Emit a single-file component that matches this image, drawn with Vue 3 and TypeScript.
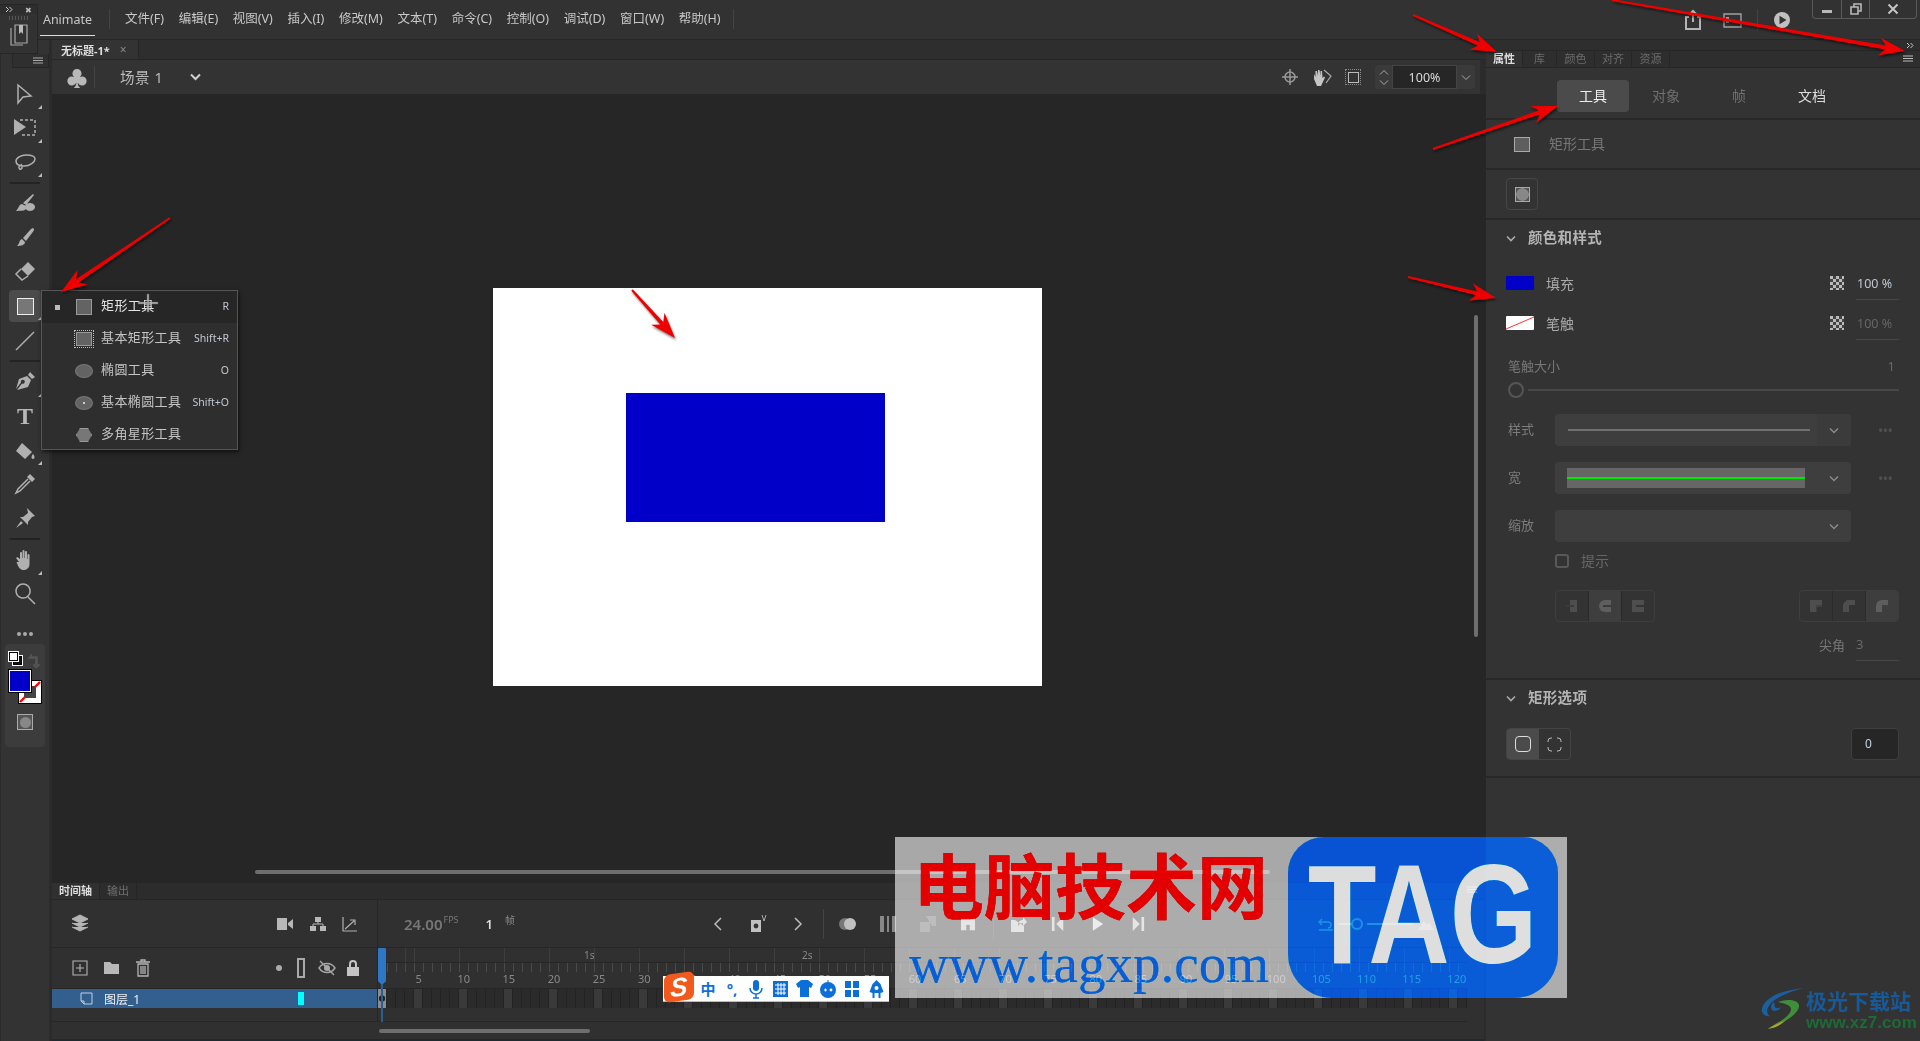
<template>
  <div class="app">
    <!-- menu bar -->
    <header class="topbar">
      <div class="brand">Animate</div>
      <nav class="menu">
        <span v-for="m in menus" :key="m">{{ m }}</span>
      </nav>
      <div class="top-actions">
        <svg class="ico" width="22" height="22" viewBox="0 0 22 22"><path d="M7 8H4v12h14V8h-3M11 2v11M8 5l3-3 3 3" fill="none" stroke="#b4b4b4" stroke-width="2" /></svg>
        <svg class="ico win-ico" width="22" height="22" viewBox="0 0 22 22"><path d="M2 5h17v13H2zM2 5" fill="none" stroke="#a0a0a0" stroke-width="1.4" /><rect x="4" y="8" width="3" height="6" fill="#a0a0a0" /></svg>
        <i class="top-sep"></i>
        <svg class="ico" width="18" height="18" viewBox="0 0 18 18"><circle cx="9" cy="9" r="8" fill="#c0c0c0" /><path d="M6.5 4.8L13.5 9l-7 4.2z" fill="#333" /></svg>
      </div>
      <div class="winbtns">
        <span><i class="min"></i></span>
        <span><svg width="12" height="12" viewBox="0 0 12 12"><path d="M1 4h7v7H1zM4 4V1h7v7H8" fill="none" stroke="#b8b8b8" stroke-width="1.6" /></svg></span>
        <span><svg width="12" height="12" viewBox="0 0 12 12"><path d="M1.5 1.5l9 9M10.5 1.5l-9 9" stroke="#c4c4c4" stroke-width="2" /></svg></span>
      </div>
    </header>

    <div class="workspace">
      <!-- tools -->
      <aside class="toolbar">
        <div class="tool-head">
          <span class="tool-head-box"><svg width="12" height="8" viewBox="0 0 12 8"><path d="M1 1h10M1 3.5h10M1 6h10" stroke="#aaa" /></svg></span>
        </div>
        <template v-for="(group, gi) in tools" :key="gi">
          <div v-if="gi" class="tool-sep"><i></i></div>
          <div v-for="t in group" :key="t.id" class="tool" :class="{ active: t.id === 'rect' }">
            <span v-if="t.id === 'text'" class="tool-t">T</span>
            <i v-else-if="t.id === 'rect'" class="rect-ico"></i>
            <svg v-else width="24" height="24" viewBox="0 0 24 24">
              <path v-if="t.fill" :d="t.fill" fill="#b0b0b0" />
              <path v-if="t.line" :d="t.line" fill="none" stroke="#b0b0b0" stroke-width="1.5" :stroke-dasharray="t.dash" />
            </svg>
            <b v-if="t.corner" class="corner"></b>
          </div>
        </template>
        <div class="tool-dots"><i></i><i></i><i></i></div>
        <div class="colors">
          <div class="swap-row">
            <span class="mini-sw"><i></i><i></i></span>
            <svg width="14" height="14" viewBox="0 0 14 14"><path d="M2 5l3-3v2h5v7H8l2 3 3-3h-2V3H5V0" fill="none" stroke="#555" stroke-width="1.5" /></svg>
          </div>
          <div class="sw-stack">
            <div class="stroke-sw"><svg width="22" height="22" viewBox="0 0 22 22"><path d="M1 21l5-5M16 6l5-5" stroke="#f00" stroke-width="2.4" /></svg></div>
            <div class="fill-sw"></div>
          </div>
          <div class="draw-btn"><i></i></div>
        </div>
      </aside>

      <!-- document area -->
      <main class="center">
        <div class="doc-tabs">
          <div class="doc-tab"><strong>无标题-1*</strong><span>×</span></div>
        </div>
        <div class="scene">
          <span class="club">♣</span>
          <i class="scene-sep"></i>
          <span class="scene-name">场景 1</span>
          <svg class="scene-chev" width="11" height="8" viewBox="0 0 11 8"><path d="M1 1.5l4.5 4.5L10 1.5" fill="none" stroke="#d0d0d0" stroke-width="2" /></svg>
          <div class="scene-right">
            <svg width="18" height="18" viewBox="0 0 18 18"><circle cx="9" cy="9" r="5" fill="none" stroke="#999" stroke-width="1.5" /><path d="M9 1v16M1 9h16" stroke="#999" stroke-width="1.5" /></svg>
            <svg width="22" height="20" viewBox="0 0 22 20"><path d="M3 12V7l1.500 3V4h1.500l1 5V3h1.500l1 6V4h1.500l.5 7 1.500-1.500 1 1L10 19H6z" fill="#c4c4c4" /><path d="M13 3l7 6-5 7" fill="none" stroke="#aaa" stroke-width="1.2" /></svg>
            <span class="clip-ico"><i></i></span>
            <div class="zoom-box">
              <div class="stepper">
                <svg width="10" height="7" viewBox="0 0 10 7"><path d="M1 5.5l4-4 4 4" fill="none" stroke="#aaa" /></svg>
                <svg width="10" height="7" viewBox="0 0 10 7"><path d="M1 1.5l4 4 4-4" fill="none" stroke="#aaa" /></svg>
              </div>
              <div class="zoom-val">100%</div>
              <svg class="zoom-chev" width="10" height="7" viewBox="0 0 10 7"><path d="M1 1.5l4 4 4-4" fill="none" stroke="#aaa" /></svg>
            </div>
          </div>
        </div>

        <div class="stage-area">
          <div class="stage"><div class="stage-rect"></div></div>
          <i class="vscroll"></i>
          <i class="hscroll"></i>
        </div>

        <!-- timeline -->
        <section class="timeline">
          <div class="tl-tabs">
            <span class="on">时间轴</span>
            <span>输出</span>
            <svg class="tl-menu" width="12" height="8" viewBox="0 0 12 8"><path d="M1 1h10M1 3.5h10M1 6h10" stroke="#aaa" /></svg>
          </div>
          <div class="tl-bar">
            <div class="tl-bar-left">
              <svg class="layers-ico" width="18" height="20" viewBox="0 0 18 20"><path d="M9 1l8 4-8 4-8-4zM1 9l8 4 8-4M1 13l8 4 8-4" fill="#b4b4b4" stroke="#b4b4b4" stroke-width="1" /></svg>
              <div class="tl-bar-icons">
                <svg width="18" height="14" viewBox="0 0 18 14"><path d="M1 1h10v12H1zM12 6l5-4v10l-5-4z" fill="#b8b8b8" /></svg>
                <svg width="18" height="16" viewBox="0 0 18 16"><path d="M6 1h6v5H6zM1 10h6v5H1zM11 10h6v5h-6z" fill="#b8b8b8" /><path d="M9 6v2H4v2M9 8h5v2" fill="none" stroke="#b8b8b8" /></svg>
                <svg width="16" height="16" viewBox="0 0 16 16"><path d="M1 1v14h14M3 13l9-8M8 4h5v5" fill="none" stroke="#b0b0b0" stroke-width="1.2" /></svg>
              </div>
            </div>
            <div class="tl-bar-right">
              <span class="fps">24.00<sup>FPS</sup></span>
              <span class="frame-no">1</span>
              <span class="frame-unit">帧</span>
              <div class="transport">
                <span><svg width="10" height="16" viewBox="0 0 10 16"><path d="M8 2L2 8l6 6" fill="none" stroke="#bbb" stroke-width="1.5" /></svg></span>
                <span><svg width="18" height="20" viewBox="0 0 18 20"><path d="M2 6h10v12H2z" fill="#c0c0c0" /><circle cx="7" cy="12" r="2.400" fill="#333" /><path d="M13 1l2 6M17 1l-2 6" stroke="#aaa" /></svg></span>
                <span><svg width="10" height="16" viewBox="0 0 10 16"><path d="M2 2l6 6-6 6" fill="none" stroke="#bbb" stroke-width="1.5" /></svg></span>
                <i class="tp-sep"></i>
                <span><svg width="18" height="16" viewBox="0 0 18 16"><circle cx="6" cy="8" r="6" fill="#777" /><circle cx="11" cy="8" r="6" fill="#c0c0c0" /></svg></span>
                <span><svg width="18" height="18" viewBox="0 0 18 18"><path d="M1 1h4v16H1zM8 1h2v16H8zM13 1h4v16h-4z" fill="#888" /></svg></span>
                <span><svg width="18" height="18" viewBox="0 0 18 18"><path d="M1 7h10v10H1zM7 1h10v10h-4" fill="#5a5a5a" /></svg></span>
                <span><svg width="16" height="14" viewBox="0 0 18 16"><path d="M1 1h16v14h-6V9H7v6H1z" fill="#c0c0c0" /></svg></span>
                <i class="tp-sep"></i>
                <span><svg width="18" height="18" viewBox="0 0 18 18"><path d="M6 5H2v12h13v-6M9 11c0-4 2-6 5-6V2l4 5-4 4V8c-2 0-4 1-5 3z" fill="#c0c0c0" /></svg></span>
                <span><svg width="14" height="16" viewBox="0 0 16 18"><path d="M1 1h3v16H1zM14 1v16L6 9z" fill="#c0c0c0" /></svg></span>
                <span><svg width="12" height="16" viewBox="0 0 14 18"><path d="M1 1l12 8-12 8z" fill="#d0d0d0" /></svg></span>
                <span><svg width="14" height="16" viewBox="0 0 16 18"><path d="M12 1h3v16h-3zM2 1v16l8-8z" fill="#c0c0c0" /></svg></span>
              </div>
              <div class="tl-zoom">
                <svg width="18" height="16" viewBox="0 0 18 16"><path d="M2 14h14M5 3L2 6l3 3M2 6h9a3 3 0 0 1 0 6" fill="none" stroke="#787878" stroke-width="1.4" /></svg>
                <i class="z-line"></i><i class="z-knob"></i><i class="z-line wide"></i>
                <svg width="18" height="14" viewBox="0 0 18 14"><path d="M1 13l6-9 3 4 2-3 5 8z" fill="#787878" /></svg>
              </div>
            </div>
          </div>

          <div class="tl-layers">
            <div class="layer-col">
              <div class="layer-tools">
                <svg width="16" height="16" viewBox="0 0 16 16"><path d="M1 1h14v14H1zM8 4v8M4 8h8" fill="none" stroke="#b4b4b4" stroke-width="1.1" /></svg>
                <svg width="17" height="14" viewBox="0 0 17 14"><path d="M1 1h6l2 2h7v10H1z" fill="#b8b8b8" /></svg>
                <svg width="16" height="18" viewBox="0 0 16 18"><path d="M1 3h14M6 3V1h4v2M3 5h10v12H3zM6 7v8M8 7v8M10 7v8" fill="none" stroke="#b4b4b4" stroke-width="1.3" /></svg>
                <div class="layer-flags">
                  <i class="dot"></i>
                  <i class="outline"></i>
                  <svg class="eye" width="18" height="18" viewBox="0 0 18 18"><path d="M1 9c4-6 12-6 16 0-4 6-12 6-16 0zM2 2l14 14" fill="none" stroke="#a8a8a8" stroke-width="1.4" /><circle cx="9" cy="9" r="3" fill="#a8a8a8" /></svg>
                  <svg class="lock" width="14" height="18" viewBox="0 0 14 18"><path d="M4 8V5a3 3 0 0 1 6 0v3" fill="none" stroke="#c4c4c4" stroke-width="2" /><path d="M1 8h12v9H1z" fill="#c4c4c4" /></svg>
                </div>
              </div>
              <div class="layer-row">
                <svg width="13" height="13" viewBox="0 0 13 13"><path d="M1 1h11v11H4L1 9z M1 9h3v3" fill="none" stroke="#c0d0e0" /></svg>
                <span>图层_1</span>
                <i class="cyan"></i>
              </div>
              <div class="layer-empty"></div>
            </div>
            <div class="frames-col">
              <div class="ruler">
                <div class="ruler-sec"><span class="s1">1s</span><span class="s2">2s</span></div>
                <div class="ruler-ticks"></div>
                <div class="ruler-nums"><span v-for="n in frameNums" :key="n">{{ n }}</span></div>
              </div>
              <div class="frames">
                <i v-for="f in 121" :key="f" :class="{ first: f === 1, five: f % 5 === 0 }"></i>
              </div>
              <div class="frames-empty"></div>
              <div class="playhead"></div>
              <div class="playline"></div>
            </div>
          </div>
          <div class="tl-foot"><i></i></div>
        </section>
      </main>

      <!-- properties -->
      <aside class="props">
        <div class="props-collapse">
          <svg width="8" height="7" viewBox="0 0 8 7"><path d="M1 1l2.500 2.500L1 6M4.500 1L7 3.500 4.500 6" fill="none" stroke="#ccc" /></svg>
        </div>
        <div class="props-tabs">
          <span v-for="(p, i) in panelTabs" :key="p" :class="{ on: i === 0 }">{{ p }}</span>
          <svg width="12" height="8" viewBox="0 0 12 8"><path d="M1 1h10M1 3.5h10M1 6h10" stroke="#bbb" /></svg>
        </div>
        <div class="sub-tabs">
          <span class="on">工具</span><span class="dim">对象</span><span class="dim">帧</span><span>文档</span>
        </div>
        <div class="tool-name"><i class="rect-ico small"></i><span>矩形工具</span></div>
        <div class="obj-row"><div class="obj-btn"><i></i></div></div>

        <section class="colors-sec">
          <h3><svg width="10" height="7" viewBox="0 0 10 7"><path d="M1 1.500l4 4 4-4" fill="none" stroke="#aaa" stroke-width="1.600" /></svg>颜色和样式</h3>
          <div class="paint-row first">
            <i class="sw fill"></i><span>填充</span><i class="checker"></i><em class="pct">100 %</em>
          </div>
          <div class="paint-row">
            <i class="sw stroke"><svg width="28" height="14" viewBox="0 0 28 14"><path d="M0 13L28 1" stroke="#f33" /></svg></i><span>笔触</span><i class="checker"></i><em class="pct off">100 %</em>
          </div>
          <div class="size-head"><label>笔触大小</label><b>1</b></div>
          <div class="slider"><i class="knob"></i><i class="track"></i></div>
          <div class="field">
            <label>样式</label>
            <div class="select"><i class="style-line"></i><div class="sel-arrow split"><svg width="10" height="7" viewBox="0 0 10 7"><path d="M1 1.500l4 4 4-4" fill="none" stroke="#8a8a8a" stroke-width="1.500" /></svg></div></div>
            <span class="more">•••</span>
          </div>
          <div class="field">
            <label>宽</label>
            <div class="select"><div class="width-prev"><i></i></div><div class="sel-arrow"><svg width="10" height="7" viewBox="0 0 10 7"><path d="M1 1.500l4 4 4-4" fill="none" stroke="#8a8a8a" stroke-width="1.500" /></svg></div></div>
            <span class="more">•••</span>
          </div>
          <div class="field">
            <label>缩放</label>
            <div class="select"><div class="sel-arrow"><svg width="10" height="7" viewBox="0 0 10 7"><path d="M1 1.500l4 4 4-4" fill="none" stroke="#8a8a8a" stroke-width="1.500" /></svg></div></div>
          </div>
          <div class="hint"><i></i><span>提示</span></div>
          <div class="caps">
            <div class="seg">
              <span><svg width="12" height="12" viewBox="0 0 12 12"><path d="M4 0h7v12H4z" fill="#4e4e4e" /><rect x="0" y="5" width="8" height="2" fill="#3a3a3a" /></svg></span>
              <span class="lit"><svg width="12" height="12" viewBox="0 0 12 12"><path d="M6 0h6v12H6A6 6 0 0 1 6 0z" fill="#5e5e5e" /><rect x="4" y="5" width="8" height="2" fill="#3a3a3a" /></svg></span>
              <span><svg width="12" height="12" viewBox="0 0 12 12"><rect width="12" height="12" fill="#4e4e4e" /><rect x="4" y="5" width="8" height="2" fill="#333" /></svg></span>
            </div>
            <div class="seg">
              <span><svg width="12" height="12" viewBox="0 0 12 12"><path d="M0 0h12v5H6v7H0z" fill="#4e4e4e" /><path d="M6 6h6M6 6v6" stroke="#4e4e4e" /></svg></span>
              <span><svg width="12" height="12" viewBox="0 0 12 12"><path d="M4 0h8v5H6v7H0V4z" fill="#4e4e4e" /></svg></span>
              <span class="lit"><svg width="12" height="12" viewBox="0 0 12 12"><path d="M6 0h6v5H6v7H0V6a6 6 0 0 1 6-6z" fill="#5e5e5e" /></svg></span>
            </div>
          </div>
          <div class="miter"><label>尖角</label><em>3</em></div>
        </section>

        <section class="rect-sec">
          <h3><svg width="10" height="7" viewBox="0 0 10 7"><path d="M1 1.500l4 4 4-4" fill="none" stroke="#aaa" stroke-width="1.600" /></svg>矩形选项</h3>
          <div class="rect-opts">
            <div class="corner-seg">
              <span class="on"><i></i></span>
              <span><svg width="15" height="15" viewBox="0 0 15 15"><path d="M1 5V4a3 3 0 0 1 3-3h1M10 1h1a3 3 0 0 1 3 3v1M14 10v1a3 3 0 0 1-3 3h-1M5 14H4a3 3 0 0 1-3-3v-1" fill="none" stroke="#bbb" /></svg></span>
            </div>
            <div class="radius">0</div>
          </div>
        </section>
      </aside>
    </div>

    <!-- collapsed floating panel -->
    <div class="float-panel">
      <div class="fp-head"><svg width="8" height="7" viewBox="0 0 8 7"><path d="M1 1l2.500 2.500L1 6M4.500 1L7 3.500 4.500 6" fill="none" stroke="#ccc" /></svg><span>✖</span></div>
      <div class="fp-grip"></div>
      <svg width="18" height="22" viewBox="0 0 18 22"><path d="M5 1h12v18H5z" fill="none" stroke="#a8a8a8" stroke-width="1.200" /><path d="M1 4v17h12" fill="none" stroke="#a8a8a8" stroke-width="1.200" /><path d="M9 1h4v9l-2-2-2 2z" fill="#b8b8b8" /></svg>
    </div>

    <!-- tool flyout -->
    <div class="flyout">
      <div v-for="(item, i) in flyout" :key="item.label" class="fly-row" :class="{ current: i === 0 }">
        <i class="fly-mark"></i>
        <span class="fly-ico" :class="item.icon"><b></b></span>
        <span class="fly-label">{{ item.label }}</span>
        <span class="fly-key">{{ item.key }}</span>
      </div>
    </div>
    <svg class="cursor" width="22" height="20" viewBox="0 0 22 20"><path d="M11 1v18M1 10h20" stroke="#ddd" stroke-width="1.500" /><path d="M10 1h2v18h-2zM1 9h20v2H1z" fill="none" stroke="#555" stroke-width=".5" /></svg>

    <!-- site watermark -->
    <div class="mark">
      <div class="mark-text">
        <div class="mark-cn">电脑技术网</div>
        <div class="mark-url">www.tagxp.com</div>
      </div>
      <div class="mark-logo"><span>TAG</span></div>
    </div>

    <!-- input method bar -->
    <div class="ime">
      <span class="ime-s">S</span>
      <div class="ime-icons">
        <b>中</b>
        <b>°,</b>
        <svg width="14" height="20" viewBox="0 0 14 20"><rect x="4" y="1" width="6" height="11" rx="3" fill="#0c6fd8" /><path d="M1 9a6 6 0 0 0 12 0M7 15v4M4 19h6" fill="none" stroke="#0c6fd8" stroke-width="1.500" /></svg>
        <svg width="15" height="16" viewBox="0 0 15 16"><path d="M0 0h15v16H0z" fill="#0c6fd8" /><path d="M2 4h11M2 8h11M2 12h11M5 2v12M8 2v12M11 2v12" stroke="#fff" /></svg>
        <svg width="17" height="17" viewBox="0 0 17 17"><path d="M5 0h7l5 4-2 4-2-1v10H4V7L2 8 0 4z" fill="#0c6fd8" /></svg>
        <svg width="16" height="18" viewBox="0 0 16 18"><circle cx="8" cy="10" r="8" fill="#0c6fd8" /><path d="M8 0v3" stroke="#0c6fd8" /><path d="M4 10h3M5.500 8.500v3" stroke="#fff" /><circle cx="11" cy="10" r="1.400" fill="#fff" /></svg>
        <svg width="14" height="16" viewBox="0 0 14 16"><path d="M0 0h6v7H0zM8 0h6v7H8zM0 9h6v7H0zM8 9h6v7H8z" fill="#0c6fd8" /></svg>
        <svg width="15" height="18" viewBox="0 0 15 18"><path d="M7.500 0l4 4 3 8-3 1v5h-2v-5h-4v5h-2v-5l-3-1 3-8z" fill="#0c6fd8" /><circle cx="7.500" cy="8" r="2" fill="#fff" /></svg>
      </div>
    </div>

    <!-- download site logo -->
    <div class="xz">
      <svg width="44" height="42" viewBox="0 0 44 42">
        <path d="M44 0C24 2 6 8 2 20c-1 5 2 9 8 8-3-2-4-6-1-10C14 10 28 4 44 0z" fill="#1a5f9e" />
        <path d="M14 14c-4 3-4 8 0 9 4 0 6-2 7-4-2 1-5 2-6 0-1-2 0-4-1-5z" fill="#1a5f9e" />
        <path d="M18 14c8-3 19-3 21 3 1 8-14 18-32 24 12-7 24-13 24-20 0-4-8-6-13-7z" fill="#3f8f3a" />
        <path d="M8 41c6-4 14-7 18-9-4 4-10 8-18 9z" fill="#b3a52a" />
      </svg>
      <div>
        <div class="xz-cn">极光下载站</div>
        <div class="xz-url">www.xz7.com</div>
      </div>
    </div>

    <!-- red annotation arrows -->
    <svg class="arrows" width="1920" height="1041" viewBox="0 0 1920 1041">
      <polygon v-for="(a, i) in arrowShapes" :key="i" :points="a" fill="#ef0000" />
    </svg>
  </div>
</template>

<script setup lang="ts">
import { computed } from 'vue';

interface Tool {
  id: string;
  fill?: string;
  line?: string;
  dash?: string;
  corner?: boolean;
}

const menus = ['文件(F)', '编辑(E)', '视图(V)', '插入(I)', '修改(M)', '文本(T)', '命令(C)', '控制(O)', '调试(D)', '窗口(W)', '帮助(H)'];
const panelTabs = ['属性', '库', '颜色', '对齐', '资源'];

const tools: Tool[][] = [
  [
    { id: 'select', line: 'M5 3v18l5-6 8-1z', corner: true },
    { id: 'free', fill: 'M1 3v16l12-8z', line: 'M7 4h15v15H8', dash: '3 2', corner: true },
    { id: 'lasso', line: 'M13 5c5 0 9 1 9 4s-5 7-11 7c-5 0-8-2-8-5s5-6 10-6zM7 15c-2 2-1 5 1 4s1-3 0-5', corner: true },
  ],
  [
    { id: 'paint', fill: 'M20 2l1 1-8 10-3-2zM9 12c-3 0-3 4-6 7l8-.5c2-1 3-3 2-4.500zM17 11a5 4 0 1 0 .01 0z' },
    { id: 'brush', fill: 'M20 2c1.500 1 1 2 .5 3L13 15l-3-3 8-9zM9 13c-3 1-2 4-5 7 4 0 8-1 8-4z' },
    { id: 'eraser', fill: 'M15 2l7 7-7 7-7-7z', line: 'M8 9l-5 5 6 6 6-4' },
    { id: 'rect', corner: true },
    { id: 'line', line: 'M3 22L21 4' },
  ],
  [
    { id: 'pen', fill: 'M17 2l5 5-3 2-4-4zM14 6l4 4-3 7-11 3 5-6.500a2 2 0 1 0-1-1L3 19l3-10z', corner: true },
    { id: 'text' },
    { id: 'bucket', fill: 'M9 5l10 9-7 7-9-8zM4 3l7 7M20 16c2 2 2 5 0 5s-2-3 0-5z', corner: true },
    { id: 'dropper', fill: 'M17 2l5 5-3 3-5-5z', line: 'M15 7L5 17l-2 4 4-2L17 9' },
    { id: 'pin', fill: 'M14 2l8 8-3 1-4 5v3l-8-8h3l5-4zM8 15l-5 7 7-5z' },
  ],
  [
    { id: 'hand', fill: 'M6 14L3 10l1.500-1 2.500 2V5a1 1 0 0 1 2 0v5h.5V3a1 1 0 0 1 2 0v7h.5V4a1 1 0 0 1 2 0v7h.5V7a1 1 0 0 1 2 0v9c0 4-3 6-6 6-3 0-5-2-7-8z', corner: true },
    { id: 'zoom', line: 'M15 14a7 7 0 1 1 .01-.01zM15 15l7 7' },
  ],
];

const flyout = [
  { label: '矩形工具', key: 'R', icon: 'i-rect' },
  { label: '基本矩形工具', key: 'Shift+R', icon: 'i-prect' },
  { label: '椭圆工具', key: 'O', icon: 'i-oval' },
  { label: '基本椭圆工具', key: 'Shift+O', icon: 'i-poval' },
  { label: '多角星形工具', key: '', icon: 'i-poly' },
];

const frameNums = Array.from({ length: 24 }, (_, i) => (i + 1) * 5);

// [tailX, tailY, tipX, tipY]
const arrows = [
  [1413, 15, 1497, 52],
  [1612, 0, 1905, 51],
  [1433, 149, 1558, 106],
  [1408, 277, 1496, 298],
  [170, 218, 61, 292],
  [632, 290, 675, 338],
];

const arrowShapes = computed(() =>
  arrows.map(([x1, y1, x2, y2]) => {
    const len = Math.hypot(x2 - x1, y2 - y1);
    const ux = (x2 - x1) / len;
    const uy = (y2 - y1) / len;
    const nx = -uy;
    const ny = ux;
    const head = Math.min(26, len * 0.4);
    const at = (along: number, side: number) =>
      `${(x2 - ux * along + nx * side).toFixed(1)},${(y2 - uy * along + ny * side).toFixed(1)}`;
    return [
      `${x1 + nx},${y1 + ny}`,
      at(head - 6, 2),
      at(head, 9),
      `${x2},${y2}`,
      at(head, -9),
      at(head - 6, -2),
      `${x1 - nx},${y1 - ny}`,
    ].join(' ');
  }),
);
</script>

<style>
html,
body {
  margin: 0;
  background: #2a2a2a;
}
</style>

<style scoped>
.app {
  position: relative;
  width: 1920px;
  height: 1041px;
  overflow: hidden;
  display: flex;
  flex-direction: column;
  background: #2b2b2b;
  color: #c8c8c8;
  font-family: "Noto Sans", "Noto Sans CJK SC", sans-serif;
  font-size: 13px;
}
i, em { font-style: normal; }

/* top bar */
.topbar {
  height: 39px;
  flex: none;
  display: flex;
  align-items: center;
  background: #323232;
  border-bottom: 1px solid #262626;
  box-sizing: content-box;
}
.brand {
  margin-left: 40px;
  width: 55px;
  height: 36px;
  line-height: 40px;
  text-align: center;
  color: #c8c8c8;
  border-bottom: 1px solid #ddd;
  box-sizing: border-box;
  align-self: flex-start;
  font-size: 12.5px;
}
.menu {
  margin-left: 14px;
  padding: 0 12px 0 15px;
  display: flex;
  gap: 14.7px;
  height: 20px;
  line-height: 20px;
  border-left: 1px solid #444;
  border-right: 1px solid #444;
  font-size: 12.5px;
  white-space: nowrap;
  margin-top: -2px;
}
.top-actions {
  margin-left: auto;
  display: flex;
  align-items: center;
}
.ico { display: block; margin-top: 0; }
.win-ico { margin-left: 18px; }
.top-sep {
  width: 1px;
  height: 22px;
  background: #444;
  margin: 0 15px 0 13px;
}
.winbtns {
  align-self: flex-start;
  margin: 0 3px 0 21px;
  display: flex;
  height: 18px;
  border: 1px solid #5a5a5a;
  border-top: none;
  border-radius: 0 0 4px 4px;
}
.winbtns span {
  display: flex;
  align-items: center;
  justify-content: center;
  border-left: 1px solid #5a5a5a;
  width: 27px;
}
.winbtns span:first-child { border-left: none; width: 28px; }
.winbtns span:last-child { width: 46px; }
.min { width: 10px; height: 3px; background: #b8b8b8; margin-top: 5px; }

.workspace {
  flex: 1;
  min-height: 0;
  display: flex;
}

/* left tools */
.toolbar {
  width: 48px;
  margin-left: 1px;
  flex: none;
  background: #333;
  display: flex;
  flex-direction: column;
  align-items: center;
}
.tool-head {
  height: 37px;
  width: 100%;
  flex: none;
  display: flex;
  justify-content: flex-end;
  padding-top: 14px;
  box-sizing: border-box;
}
.tool-head-box {
  width: 37px;
  height: 14px;
  display: flex;
  align-items: center;
  justify-content: flex-end;
  padding-right: 4px;
  box-sizing: border-box;
  background: #2f2f2f;
  border: 1px solid #262626;
  border-top: none;
}
.tool {
  position: relative;
  flex: none;
  width: 32px;
  height: 34px;
  display: flex;
  align-items: center;
  justify-content: center;
  border-radius: 4px;
}
.tool.active { background: #4b4b4b; height: 32px; margin: 1px 0; }
.corner {
  position: absolute;
  right: -1px;
  bottom: 2px;
  width: 0;
  height: 0;
  border-left: 4px solid transparent;
  border-bottom: 4px solid #bbb;
}
.tool-t {
  font: bold 24px/1 "Liberation Serif", serif;
  color: #b8b8b8;
}
.tool-sep {
  flex: none;
  height: 8px;
  width: 100%;
  display: flex;
  align-items: center;
  justify-content: center;
}
.tool-sep i { width: 30px; height: 2px; background: #232323; }
.rect-ico {
  display: block;
  width: 15px;
  height: 15px;
  background: #777;
  border: 1px solid #eee;
}
.rect-ico.small {
  width: 14px;
  height: 13px;
  background: #5e5e5e;
  border-color: #aaa;
}
.tool-dots {
  margin-top: 13px;
  height: 20px;
  flex: none;
  display: flex;
  align-items: center;
  gap: 2px;
}
.tool-dots i { width: 4px; height: 4px; border-radius: 50%; background: #aaa; }
.colors {
  flex: none;
  width: 40px;
  height: 103px;
  background: #3c3c3c;
  border-radius: 4px;
  display: flex;
  flex-direction: column;
  padding: 8px 4px 0;
  box-sizing: border-box;
}
.swap-row { display: flex; justify-content: space-between; height: 16px; }
.swap-row svg { margin-top: 2px; margin-right: 1px; }
.mini-sw { position: relative; display: block; width: 12px; height: 12px; }
.mini-sw i { position: absolute; width: 7px; height: 7px; border: 1px solid #000; }
.mini-sw i:first-child { left: 0; top: 0; background: #fff; z-index: 1; outline: 1px solid #fff; }
.mini-sw i:last-child { left: 4px; top: 4px; background: #111; outline: 1px solid #fff; }
.sw-stack { position: relative; height: 44px; margin-top: 2px; }
.fill-sw {
  position: absolute;
  left: 0;
  top: 0;
  width: 20px;
  height: 20px;
  background: #0000c8;
  border: 1px solid #fff;
  outline: 1px solid #000;
}
.stroke-sw {
  position: absolute;
  left: 10px;
  top: 11px;
  width: 22px;
  height: 22px;
  border: 5px solid #fff;
  box-sizing: border-box;
  outline: 1px solid #000;
  background: #444;
}
.stroke-sw svg { position: absolute; left: -5px; top: -5px; }
.draw-btn {
  align-self: center;
  width: 14px;
  height: 14px;
  border: 1px solid #aaa;
  background: #555;
  display: flex;
  align-items: center;
  justify-content: center;
}
.draw-btn i { width: 11px; height: 11px; border-radius: 50%; background: #888; }

/* center */
.center {
  width: 1434px;
  flex: none;
  margin-left: 3px;
  display: flex;
  flex-direction: column;
  min-width: 0;
}
.doc-tabs {
  height: 20px;
  flex: none;
  background: #2e2e2e;
  border-bottom: 1px solid #262626;
  box-sizing: border-box;
}
.doc-tab {
  width: 87px;
  height: 19px;
  background: #333;
  border-right: 1px solid #262626;
  display: flex;
  align-items: center;
  padding-left: 9px;
  box-sizing: border-box;
  font-size: 11px;
  color: #ddd;
}
.doc-tab span { margin-left: 10px; color: #888; font-size: 12px; }
.doc-tab strong { font-weight: 700; }
.scene {
  height: 34px;
  flex: none;
  background: #333;
  margin-right: 6px;
  display: flex;
  align-items: center;
}
.club {
  margin-left: 14px;
  width: 20px;
  font-size: 22px;
  line-height: 1;
  color: #b8b8b8;
}
.scene-sep { width: 1px; height: 22px; background: #444; margin-left: 8px; }
.scene-name { margin-left: 25px; font-size: 14.5px; color: #bbb; letter-spacing: .6px; margin-top: -2px; }
.scene-chev { margin-left: 27px; }
.scene-right {
  margin-left: auto;
  margin-right: 5px;
  display: flex;
  align-items: center;
  gap: 12px;
}
.clip-ico {
  width: 14px;
  height: 14px;
  border: 1px dotted #888;
  padding: 0;
  display: flex;
  align-items: center;
  justify-content: center;
  margin-right: 2px;
}
.clip-ico i { width: 9px; height: 9px; border: 1px solid #bbb; background: #333; }
.zoom-box {
  display: flex;
  align-items: center;
  height: 24px;
  width: 100px;
  background: #3a3a3a;
  border-radius: 3px;
}
.stepper {
  width: 17px;
  display: flex;
  flex-direction: column;
  align-items: center;
  gap: 3px;
}
.zoom-val {
  width: 65px;
  height: 24px;
  line-height: 24px;
  text-align: center;
  background: #262626;
  border: 1px solid #444;
  box-sizing: border-box;
  font-size: 12.5px;
  color: #d8d8d8;
}
.zoom-chev { margin-left: 4px; }

.stage-area {
  position: relative;
  flex: 1;
  min-height: 0;
  background: #262626;
  padding: 194px 0 0 441px;
}
.stage {
  position: relative;
  width: 549px;
  height: 398px;
  background: #fff;
}
.stage-rect {
  position: absolute;
  left: 133px;
  top: 105px;
  width: 259px;
  height: 129px;
  background: #0000c8;
}
.vscroll {
  position: absolute;
  left: 1422px;
  top: 221px;
  width: 4px;
  height: 322px;
  background: #6e6e6e;
  border-radius: 2px;
}
.hscroll {
  position: absolute;
  left: 203px;
  top: 776px;
  width: 1015px;
  height: 4px;
  background: #6e6e6e;
  border-radius: 2px;
}

/* timeline */
.timeline {
  height: 158px;
  flex: none;
  background: #303030;
  margin-right: 2px;
  display: flex;
  flex-direction: column;
  border-bottom: 2px solid #1d2a30;
  box-sizing: border-box;
  position: relative;
}
.tl-tabs {
  height: 16px;
  flex: none;
  display: flex;
  background: #2c2c2c;
  border-bottom: 1px solid #262626;
  font-size: 11px;
  line-height: 16px;
  color: #6f6f6f;
}
.tl-tabs span {
  padding: 0 7px;
  min-width: 22px;
  text-align: center;
  border-right: 1px solid #262626;
}
.tl-tabs .on { color: #ddd; background: #303030; font-weight: 700; width: 33px; }
.tl-menu { margin-left: auto; margin-right: 6px; margin-top: 3px; }
.tl-bar {
  height: 48px;
  flex: none;
  display: flex;
  border-bottom: 1px solid #262626;
  box-sizing: border-box;
}
.tl-bar-left {
  width: 326px;
  flex: none;
  display: flex;
  align-items: center;
  padding-left: 19px;
  box-sizing: border-box;
  border-right: 1px solid #262626;
}
.tl-bar-icons {
  margin-left: auto;
  margin-right: 19px;
  display: flex;
  align-items: center;
  gap: 15px;
}
.tl-bar-right {
  flex: 1;
  display: flex;
  align-items: center;
  position: relative;
}
.fps {
  margin-left: 26px;
  font-size: 15px;
  color: #777;
  font-weight: 600;
}
.fps sup { font-size: 9px; font-weight: 400; margin-left: 1px; vertical-align: 7px; line-height: 0; }
.frame-no { margin-left: 27px; color: #ddd; font-weight: 600; font-size: 13px; }
.frame-unit { margin-left: 12px; color: #888; font-size: 10px; margin-top: -8px; }
.transport {
  margin-left: 183px;
  display: flex;
  align-items: center;
}
.transport span {
  width: 40px;
  flex: none;
  display: flex;
  justify-content: center;
}
.tp-sep { width: 1px; height: 30px; background: #444; margin: 0 4px 0 5px; flex: none; }
.tl-zoom {
  margin-left: 159px;
  display: flex;
  align-items: center;
}
.z-line { width: 12px; height: 2px; background: #787878; margin-left: 4px; }
.z-line.wide { width: 46px; margin-right: 4px; }
.z-knob { width: 12px; height: 12px; border: 2px solid #787878; border-radius: 50%; box-sizing: border-box; }

.tl-layers {
  flex: 1;
  min-height: 0;
  display: flex;
}
.layer-col {
  width: 326px;
  flex: none;
  border-right: 1px solid #262626;
  box-sizing: border-box;
  display: flex;
  flex-direction: column;
}
.layer-tools {
  height: 41px;
  flex: none;
  display: flex;
  align-items: center;
  gap: 15px;
  padding-left: 20px;
  border-bottom: 1px solid #262626;
  box-sizing: border-box;
}
.layer-flags {
  margin-left: auto;
  margin-right: 17px;
  display: flex;
  align-items: center;
  gap: 15px;
}
.layer-flags .dot { width: 6px; height: 6px; border-radius: 50%; background: #aaa; }
.layer-flags .outline { height: 16px; border: 2px solid #aaa; box-sizing: content-box; width: 4px; }
.layer-flags .eye { margin-left: -2px; }
.layer-flags .lock { margin-left: -5px; }
.layer-row {
  position: relative;
  height: 19px;
  flex: none;
  background: #335f8f;
  display: flex;
  align-items: center;
  color: #f0f0f0;
  font-size: 12px;
  padding-left: 28px;
}
.layer-row span { margin-left: 11px; }
.cyan {
  position: absolute;
  left: 246px;
  top: 3px;
  width: 6px;
  height: 13px;
  background: #0ff;
}
.layer-empty { height: 13px; flex: none; border-bottom: 1px solid #262626; }

.frames-col {
  position: relative;
  flex: 1;
  min-width: 0;
}
.ruler { height: 41px; width: 1089px; border-bottom: 1px solid #262626; box-sizing: border-box; }
.ruler-sec {
  position: relative;
  height: 15px;
  background: repeating-linear-gradient(90deg, #3e3e3e 0 1px, transparent 1px 45px) 36px 0;
  border-bottom: 1px solid #262626;
  box-sizing: border-box;
  font-size: 10px;
  color: #888;
}
.s1, .s2 { position: absolute; top: 0; }
.s1 { left: 206px; }
.s2 { left: 424px; }
.ruler-ticks {
  height: 9px;
  background: repeating-linear-gradient(90deg, #4a4a4a 0 1px, transparent 1px 9px);
}
.ruler-nums {
  display: flex;
  padding-left: 18px;
  height: 14px;
  line-height: 14px;
  font-size: 11px;
  color: #888;
}
.ruler-nums span { width: 45.15px; flex: none; text-align: center; }
.frames { display: flex; width: 1089px; height: 19px; }
.frames i {
  width: 9px;
  flex: none;
  box-sizing: border-box;
  background: #2b2b2b;
  border-right: 1px solid #232323;
}
.frames i.five { background: #3a3a3a; }
.frames i.first { background: radial-gradient(circle, #222 0 3px, #8c8c8c 3.5px); }
.frames-empty { width: 1089px; height: 14px; border-bottom: 1px solid #262626; box-sizing: border-box; }
.playhead {
  position: absolute;
  left: 0;
  top: 0;
  width: 8px;
  height: 37px;
  background: #2f76c4;
  border-radius: 1px 1px 0 0;
  clip-path: polygon(0 0, 100% 0, 100% 90%, 50% 100%, 0 90%);
}
.playline {
  position: absolute;
  left: 3px;
  top: 36px;
  width: 2px;
  height: 38px;
  background: #2a5f95;
}
.tl-foot {
  height: 17px;
  flex: none;
  padding-left: 327px;
  display: flex;
  align-items: center;
}
.tl-foot i { width: 211px; height: 4px; border-radius: 2px; background: #6e6e6e; }

/* properties */
.props {
  width: 434px;
  flex: none;
  background: #333;
  display: flex;
  flex-direction: column;
}
.props-collapse {
  height: 10px;
  flex: none;
  background: #2e2e2e;
  border-bottom: 1px solid #262626;
  display: flex;
  justify-content: flex-end;
  align-items: center;
  padding-right: 6px;
}
.props-tabs {
  height: 16px;
  flex: none;
  display: flex;
  align-items: center;
  border-bottom: 1px solid #262626;
  box-sizing: content-box;
  background: #2e2e2e;
  font-size: 11px;
  color: #6b6b6b;
}
.props-tabs span {
  height: 16px;
  width: 37px;
  box-sizing: border-box;
  line-height: 16px;
  text-align: center;
  border-right: 1px solid #262626;
}
.props-tabs span:nth-child(2) { width: 34px; }
.props-tabs span:nth-child(3),
.props-tabs span:nth-child(5) { width: 38px; }
.props-tabs .on { color: #dcdcdc; background: #333; font-weight: 700; }
.props-tabs svg { margin-left: auto; margin-right: 6px; }
.sub-tabs {
  height: 44px;
  flex: none;
  display: flex;
  align-items: flex-start;
  padding: 12px 0 0 71px;
  border-bottom: 2px solid #282828;
  box-sizing: content-box;
  height: 38px;
  font-size: 14px;
  color: #ddd;
}
.sub-tabs span {
  width: 72px;
  margin-right: 1px;
  height: 32px;
  line-height: 32px;
  text-align: center;
}
.sub-tabs .on { background: #4b4b4b; border-radius: 4px; color: #eee; }
.sub-tabs .dim { color: #6f6f6f; }
.tool-name {
  height: 48px;
  flex: none;
  display: flex;
  align-items: center;
  padding-left: 28px;
  border-bottom: 2px solid #282828;
  box-sizing: content-box;
  font-size: 14px;
  color: #777;
}
.tool-name span { margin: -3px 0 0 19px; }
.obj-row {
  height: 48px;
  flex: none;
  display: flex;
  align-items: center;
  padding-left: 20px;
  border-bottom: 2px solid #282828;
}
.obj-btn {
  width: 32px;
  height: 32px;
  border: 1px solid #464646;
  border-radius: 4px;
  box-sizing: border-box;
  display: flex;
  align-items: center;
  justify-content: center;
}
.obj-btn i {
  width: 13px;
  height: 13px;
  border: 1px solid #aaa;
  background: radial-gradient(circle, #888 0 6px, #555 6.5px);
}
.colors-sec {
  height: 458px;
  flex: none;
  padding: 0 20px;
  border-bottom: 2px solid #282828;
  box-sizing: content-box;
}
.colors-sec h3,
.rect-sec h3 {
  margin: 0;
  height: 34px;
  line-height: 30px;
  display: flex;
  align-items: center;
  gap: 12px;
  font-size: 14.5px;
  font-weight: 700;
  color: #b4b4b4;
  box-sizing: content-box;
  letter-spacing: .3px;
}
.colors-sec h3 svg,
.rect-sec h3 svg { margin-top: 3px; }
.paint-row {
  height: 40px;
  display: flex;
  align-items: center;
  font-size: 14px;
  color: #a8a8a8;
}
.paint-row.first { margin-top: 9px; }
.sw { width: 28px; height: 14px; display: block; border-radius: 1px; }
.sw.fill { background: #0000c8; }
.sw.stroke { background: #fff; }
.sw svg { display: block; }
.paint-row span { margin-left: 12px; }
.checker {
  margin-left: auto;
  width: 14px;
  height: 14px;
  background: repeating-conic-gradient(#444 0 25%, #bbb 0 50%) 0 0 / 6px 6px;
}
.pct {
  width: 43px;
  margin-left: 12px;
  height: 32px;
  line-height: 32px;
  margin-top: 2px;
  box-sizing: border-box;
  border-bottom: 1px solid #484848;
  font-size: 12.5px;
  color: #c0c8d0;
  padding-left: 1px;
  margin-right: 1px;
}
.pct.off { color: #666; }
.size-head {
  display: flex;
  justify-content: space-between;
  height: 24px;
  line-height: 24px;
  margin-top: 11px;
  padding: 0 5px 0 2px;
  font-size: 13px;
  color: #777;
}
.size-head b { font-weight: 400; color: #5f6870; font-size: 13px; }
.slider {
  display: flex;
  align-items: center;
  height: 16px;
  margin: 4px 1px 0 2px;
}
.knob {
  width: 16px;
  height: 16px;
  border: 2px solid #555;
  border-radius: 50%;
  box-sizing: border-box;
  flex: none;
}
.track { flex: 1; height: 2px; background: #484848; margin-left: 4px; }
.field {
  display: flex;
  align-items: center;
  height: 32px;
  margin-bottom: 16px;
}
.slider + .field { margin-top: 16px; }
.field label {
  width: 49px;
  flex: none;
  color: #7c7c7c;
  font-size: 13px;
  padding-left: 2px;
  box-sizing: border-box;
  margin-top: -4px;
}
.select {
  position: relative;
  width: 296px;
  height: 32px;
  flex: none;
  background: #3e3e3e;
  border-radius: 4px;
}
.style-line {
  position: absolute;
  left: 13px;
  top: 15px;
  width: 242px;
  height: 2px;
  background: #707070;
}
.width-prev {
  position: absolute;
  left: 12px;
  top: 6px;
  width: 238px;
  height: 20px;
  background: #666;
  padding-top: 9px;
  box-sizing: border-box;
}
.width-prev i {
  display: block;
  height: 2px;
  background: #00e800;
}
.sel-arrow {
  position: absolute;
  right: 0;
  top: 0;
  width: 34px;
  height: 32px;
  display: flex;
  align-items: center;
  justify-content: center;
}
.sel-arrow.split { background: #3b3b3b; border-radius: 0 4px 4px 0; }
.more {
  margin-left: 27px;
  color: #505050;
  font-size: 14px;
  letter-spacing: -.5px;
}
.hint {
  display: flex;
  align-items: center;
  margin: -8px 0 0 49px;
  height: 22px;
  color: #666;
  font-size: 14px;
}
.hint i {
  width: 14px;
  height: 14px;
  border: 2px solid #585858;
  border-radius: 3px;
  box-sizing: border-box;
}
.hint span { margin: -2px 0 0 12px; }
.caps {
  display: flex;
  justify-content: space-between;
  margin: 18px 1px 0 49px;
}
.seg {
  display: flex;
  height: 32px;
  border: 1px solid #3e3e3e;
  border-radius: 4px;
  box-sizing: border-box;
  overflow: hidden;
}
.seg span {
  width: 32px;
  display: flex;
  align-items: center;
  justify-content: center;
  border-left: 1px solid #2a2a2a;
}
.seg span:first-child { border-left: none; }
.seg span.lit { background: #3e3e3e; }
.miter {
  display: flex;
  justify-content: flex-end;
  align-items: center;
  height: 29px;
  margin: 10px 1px 0 0;
  color: #777;
  font-size: 13px;
}
.miter label { margin-top: -4px; }
.miter em {
  width: 43px;
  height: 29px;
  line-height: 25px;
  margin-left: 11px;
  border-bottom: 1px solid #484848;
  box-sizing: border-box;
  color: #66686a;
}
.rect-sec {
  height: 96px;
  flex: none;
  padding: 0 20px;
  border-bottom: 2px solid #282828;
  box-sizing: content-box;
}
.rect-opts {
  display: flex;
  justify-content: space-between;
  margin: 14px 1px 0 0;
}
.corner-seg {
  display: flex;
  height: 32px;
  width: 65px;
  border: 1px solid #444;
  border-radius: 4px;
  box-sizing: border-box;
  overflow: hidden;
}
.corner-seg span {
  flex: 1;
  display: flex;
  align-items: center;
  justify-content: center;
}
.corner-seg .on { background: #4b4b4b; }
.corner-seg i {
  width: 14px;
  height: 14px;
  border: 1px solid #ddd;
  border-radius: 4px;
}
.radius {
  width: 48px;
  height: 32px;
  line-height: 30px;
  background: #262626;
  border: 1px solid #3e3e3e;
  border-radius: 4px;
  box-sizing: border-box;
  padding-left: 13px;
  color: #c8d4e0;
  font-size: 12px;
}

/* floating bits */
.float-panel {
  position: absolute;
  left: 0;
  top: 4px;
  width: 38px;
  height: 50px;
  background: #323232;
  border: 1px solid #262626;
  border-left: none;
  box-sizing: border-box;
  display: flex;
  flex-direction: column;
  align-items: center;
}
.fp-head {
  width: 100%;
  height: 9px;
  display: flex;
  justify-content: space-between;
  align-items: center;
  padding: 0 5px;
  box-sizing: border-box;
  font-size: 8px;
  color: #bbb;
  background: #2e2e2e;
}
.fp-grip {
  width: 20px;
  height: 4px;
  margin: 2px 0 4px;
  background: repeating-linear-gradient(90deg, #555 0 1px, transparent 1px 3px);
}
.flyout {
  position: absolute;
  left: 41px;
  top: 290px;
  width: 197px;
  height: 160px;
  background: #2e2e2e;
  border: 1px solid #555;
  box-sizing: border-box;
  box-shadow: 1px 2px 4px rgba(0, 0, 0, .6);
}
.fly-row {
  height: 32px;
  display: flex;
  align-items: center;
  position: relative;
  color: #c4c4c4;
  font-size: 13px;
}
.fly-row.current { background: #262626; color: #e4e4e4; }
.fly-mark { width: 5px; height: 5px; margin-left: 13px; }
.current .fly-mark { background: #bbb; }
.fly-ico {
  width: 16px;
  height: 14px;
  margin-left: 16px;
  display: block;
  flex: none;
  position: relative;
}
.fly-ico b { position: absolute; inset: 0; background: #636363; border: 1px solid #999; box-sizing: border-box; }
.i-rect b { top: -1px; bottom: -1px; }
.i-prect b { outline: 1px dotted #bbb; outline-offset: 1px; }
.i-oval b, .i-poval b { border-radius: 50%; border-color: #777; left: -1px; right: -1px; }
.i-poval b { background: radial-gradient(circle, #ccc 0 1px, #636363 1.5px); }
.i-poly b { clip-path: polygon(25% 0, 75% 0, 100% 50%, 75% 100%, 25% 100%, 0 50%); background: #777; }
.fly-label { margin-left: 9px; letter-spacing: .4px; margin-top: -6px; }
.fly-key {
  margin-left: auto;
  margin-right: 8px;
  font-size: 10.5px;
  color: #c0c8d0;
  margin-top: -3px;
}
.cursor { position: absolute; left: 137px; top: 293px; }

.mark {
  position: absolute;
  left: 895px;
  top: 837px;
  width: 672px;
  height: 161px;
  background: #ccc;
  mix-blend-mode: hard-light;
  display: flex;
}
.mark-text { width: 393px; flex: none; position: relative; }
.mark-cn {
  position: absolute;
  left: 18px;
  top: 3px;
  font: 700 71px/1.2 "Noto Sans CJK SC", sans-serif;
  color: #ee0000;
  white-space: nowrap;
}
.mark-url {
  position: absolute;
  left: 14px;
  top: 94px;
  font: 55px/1.2 "Liberation Serif", serif;
  color: #1a9ae6;
  white-space: nowrap;
}
.mark-logo {
  width: 270px;
  height: 161px;
  background: #1a9ae6;
  border-radius: 36px 36px 44px 44px;
  display: flex;
  align-items: center;
  justify-content: center;
  padding-bottom: 6px;
  box-sizing: border-box;
}
.mark-logo span {
  font: 700 141px/1 "Liberation Sans", sans-serif;
  color: #ebebeb;
  transform: scaleX(.8);
}
.ime {
  position: absolute;
  left: 663px;
  top: 976px;
  width: 226px;
  height: 26px;
  background: #fff;
  display: flex;
  align-items: center;
  border-bottom: 1px solid #a8c0d8;
  box-sizing: border-box;
}
.ime-s {
  position: absolute;
  left: 1px;
  top: -3px;
  width: 30px;
  height: 28px;
  background: #f2591d;
  border-radius: 6px;
  transform: skewY(-8deg);
  color: #fff;
  font: italic 700 26px/28px "Liberation Sans", sans-serif;
  text-align: center;
}
.ime-icons {
  margin-left: 33px;
  display: grid;
  grid-auto-flow: column;
  grid-auto-columns: 24px;
  justify-items: center;
  align-items: center;
  color: #0c6fd8;
}
.ime-icons b { font-size: 15px; text-align: center; }
.xz {
  position: absolute;
  left: 1760px;
  top: 988px;
  display: flex;
  gap: 2px;
}
.xz-cn {
  font: 700 21px/24px "Noto Sans CJK SC", sans-serif;
  color: #175a9c;
  white-space: nowrap;
}
.xz-url {
  font: 700 17px/22px "Liberation Sans", sans-serif;
  color: #1c6b34;
  white-space: nowrap;
}
.arrows {
  position: absolute;
  left: 0;
  top: 0;
  pointer-events: none;
  filter: drop-shadow(1px 2px 1px rgba(0, 0, 0, .5));
}
</style>
